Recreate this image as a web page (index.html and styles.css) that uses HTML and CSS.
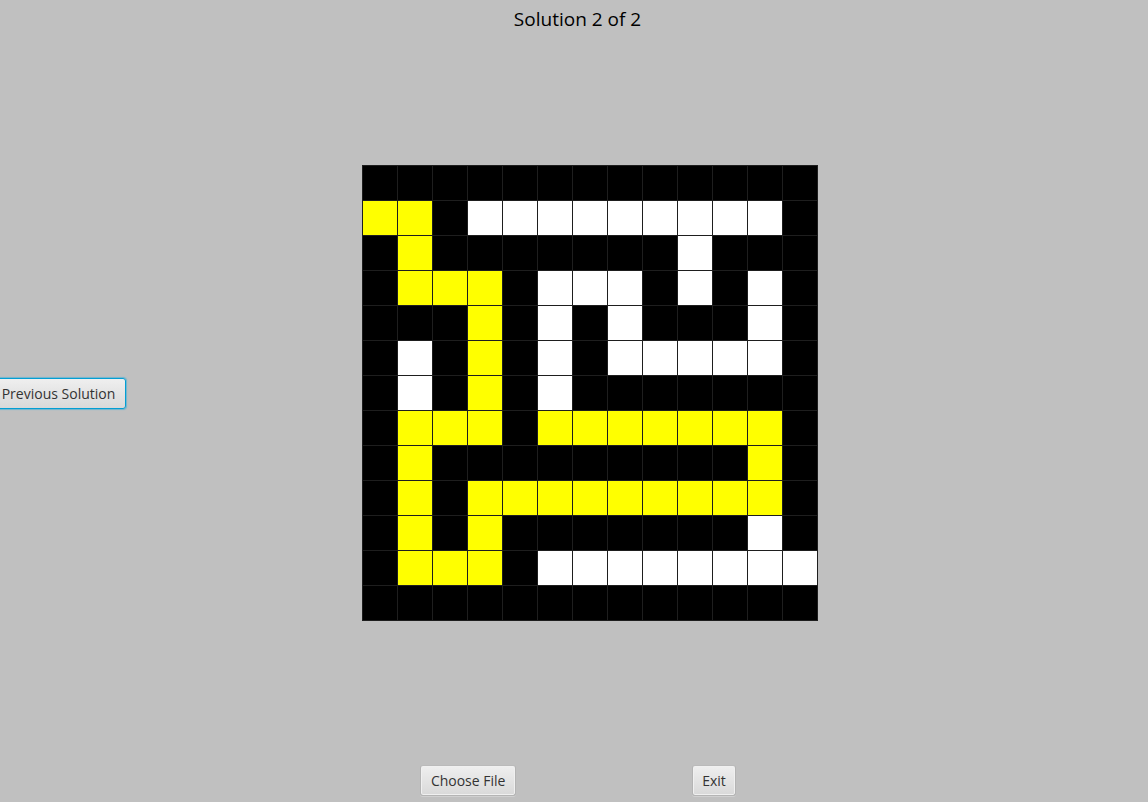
FILE: index.html
```html
<!DOCTYPE html>
<html lang="en">
<head>
  <meta charset="utf-8">
  <title>Maze Solver</title>
  <link rel="stylesheet" href="styles.css">
</head>
<body>
  <header class="top">
    <h1 class="title">Solution 2 of 2</h1>
  </header>
  <main class="center">
    <div class="side">
      <button class="btn btn-previous" type="button">Previous Solution</button>
    </div>
    <div class="stage">
      <div class="maze" id="maze" role="img" aria-label="Maze with the solution path in yellow"></div>
    </div>
  </main>
  <footer class="bottom">
    <button class="btn btn-file" type="button">Choose File</button>
    <button class="btn" type="button">Exit</button>
  </footer>
  <script src="maze.js"></script>
</body>
</html>
```

FILE: styles.css
```css
* {
  box-sizing: border-box;
}

body {
  margin: 0;
  min-height: 100vh;
  display: flex;
  flex-direction: column;
  overflow-x: hidden;
  background: #c0c0c0;
  color: #000;
  font-family: "Open Sans", "Noto Sans", sans-serif;
}

.top {
  padding: 5px 0 5px 7px;
  text-align: center;
}

.title {
  margin: 0;
  font-size: 19px;
  font-weight: 400;
  line-height: 28px;
}

.center {
  flex: 1;
  display: flex;
  align-items: center;
  padding-right: 94px;
}

.side {
  display: flex;
  margin-left: -9px;
}

.stage {
  flex: 1;
  display: flex;
  justify-content: center;
}

.maze {
  display: grid;
  grid-template-columns: repeat(13, 34px);
  grid-auto-rows: 34px;
  gap: 1px;
  padding: 1px;
  background: #1e1e1e;
}

.wall {
  background: #000;
}

.open {
  background: #fff;
}

.path {
  background: #ff0;
}

.bottom {
  display: flex;
  justify-content: center;
  gap: 176px;
  padding: 17px 0 6px 8px;
}

.btn {
  height: 31px;
  padding: 0 9px;
  border: 1px solid #b4b4b4;
  border-top-color: #bababa;
  border-radius: 3px;
  background: linear-gradient(#efefef, #d9d9d9);
  box-shadow: inset 0 0 0 1px #f0f0f0, 0 1px 0 #d0d0d0;
  color: #333;
  font-family: inherit;
  font-size: 14px;
  line-height: 20px;
  white-space: nowrap;
}

.btn-file {
  min-width: 96px;
}

.btn-previous {
  min-width: 135px;
  padding-top: 1px;
  border-color: #039ed3;
  box-shadow: 0 0 1px 1px #6fb5cf;
}
```

FILE: maze.js
```js
// '#' wall, '.' open cell, '*' solution path
const rows = [
  '#############',
  '**#.........#',
  '#*#######.###',
  '#***#...#.#.#',
  '###*#.#.###.#',
  '#.#*#.#.....#',
  '#.#*#.#######',
  '#***#*******#',
  '#*#########*#',
  '#*#*********#',
  '#*#*#######.#',
  '#***#........',
  '#############'
];

const kinds = { '#': 'wall', '.': 'open', '*': 'path' };
const maze = document.getElementById('maze');

for (const row of rows) {
  for (const mark of row) {
    const cell = document.createElement('div');
    cell.className = kinds[mark];
    maze.append(cell);
  }
}
```
